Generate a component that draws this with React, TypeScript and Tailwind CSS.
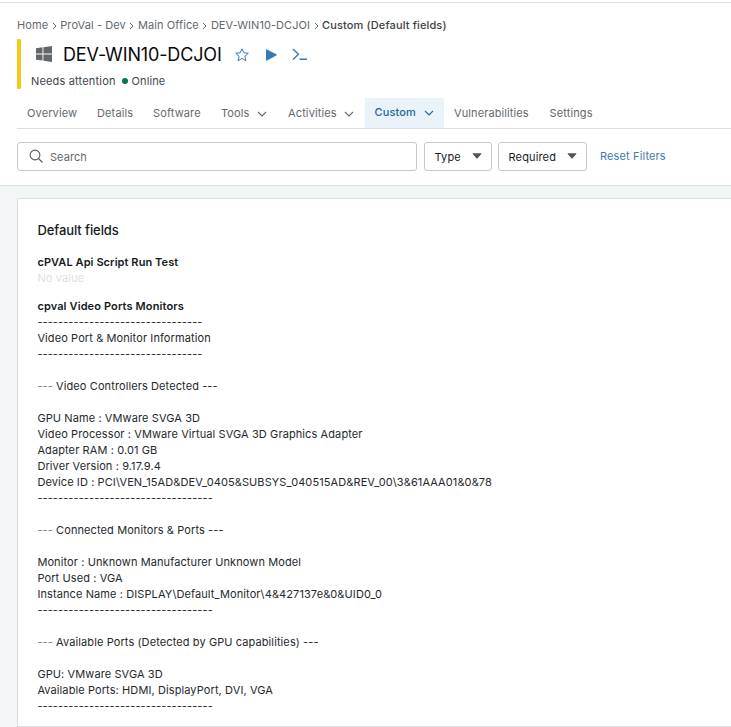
import React from "react";

const Down = () => (
  <svg width="10" height="6" viewBox="0 0 10 6" fill="none" stroke="currentColor" strokeWidth="1.1" className="mt-[2px]">
    <path d="M1 1l4 4 4-4" />
  </svg>
);

const Caret = () => (
  <svg width="10" height="6" viewBox="0 0 10 6" fill="#50575c" className="-mt-[2px]">
    <path d="M1 0.3h8q.8 0 .3.7L5.6 5.3q-.6.6-1.2 0L.7 1Q.2.3 1 .3z" />
  </svg>
);

const Sep = () => (
  <svg width="5" height="8" viewBox="0 0 5 8" fill="none" stroke="#5f666b" strokeWidth="1" className="mx-[3.5px] mt-[1px]">
    <path d="M1 1l3 3-3 3" />
  </svg>
);

const report = `--------------------------------
Video Port & Monitor Information
--------------------------------

--- Video Controllers Detected ---

GPU Name : VMware SVGA 3D
Video Processor : VMware Virtual SVGA 3D Graphics Adapter
Adapter RAM : 0.01 GB
Driver Version : 9.17.9.4
Device ID : PCI\\VEN_15AD&DEV_0405&SUBSYS_040515AD&REV_00\\3&61AAA01&0&78
----------------------------------

--- Connected Monitors & Ports ---

Monitor : Unknown Manufacturer Unknown Model
Port Used : VGA
Instance Name : DISPLAY\\Default_Monitor\\4&427137e&0&UID0_0
----------------------------------

--- Available Ports (Detected by GPU capabilities) ---

GPU: VMware SVGA 3D
Available Ports: HDMI, DisplayPort, DVI, VGA
----------------------------------`;

// Section titles carry a muted leading marker.
const Line = ({ text }: { text: string }) =>
  text.startsWith("--- ") ? (
    <div className="h-4">
      <span className="text-[#7d8285]">---</span>
      {text.slice(3)}
    </div>
  ) : (
    <div className="h-4">{text}</div>
  );

export default function App() {
  return (
    <div className="h-[727px] w-[731px] overflow-hidden bg-[#f2f6f7] font-['Inter',sans-serif] text-[11px] leading-4 text-[#25292c]">
      <header className="h-[186px] border-b border-[#d9dfe2] bg-white">
        <div className="h-[3px] border-b border-[#dcdfe1]" />
        <nav className="flex h-8 items-center pt-[12px] pl-[17px] tracking-[0.1px] whitespace-nowrap text-[#63696e]">
          <span>Home</span><Sep />
          <span>ProVal - Dev</span><Sep />
          <span>Main Office</span><Sep />
          <span className="tracking-[0.06px]">DEV-WIN10-DCJOI</span><Sep />
          <span className="font-medium tracking-[0.13px] text-[#3c4145]">Custom (Default fields)</span>
        </nav>
        <div className="mt-1 ml-[17px] flex h-[50px]">
          <div className="w-1 rounded-[1px] bg-[#f3c816]" />
          <div className="flex flex-col pl-[10px]">
            <div className="flex h-[31px] items-center">
              <svg width="16" height="16" viewBox="0 0 16 16" fill="#62676b" className="-mt-[1px] ml-[5px]">
                <path d="M0 2.3L6.5 1.3V7.4H0zM7.4 1.2L16 0v7.4H7.4zM0 8.4h6.5v6.2L0 13.7zM7.4 8.4H16V16l-8.6-1.2z" />
              </svg>
              <h1 className="ml-[11px] w-[159px] text-[18px] leading-6 font-normal tracking-[-0.14px] whitespace-nowrap text-[#080a0b]">DEV-WIN10-DCJOI</h1>
              <svg width="14" height="14" viewBox="0 0 14 14" fill="none" stroke="#337ab7" strokeWidth="1" strokeLinejoin="round" className="ml-[13px] mt-[1px]">
                <path d="M7 .8l1.8 4 4.5.4-3.4 3 1 4.6L7 10.4l-3.9 2.4 1-4.6-3.4-3 4.5-.4z" />
              </svg>
              <svg width="11" height="12" viewBox="0 0 11 12" fill="#337ab7" className="ml-[17px]">
                <path d="M0 1Q0 0 1 .4L10.3 5.3q.9.6 0 1.2L1 11.6Q0 12 0 11z" />
              </svg>
              <svg width="16" height="13" viewBox="0 0 16 13" fill="none" stroke="#337ab7" strokeWidth="1.4" className="-mt-[1px] ml-[15px]">
                <path d="M1 1l5.4 5.2L1 11.4M7.5 11.3H15" />
              </svg>
            </div>
            <div className="mt-[3px] flex h-4 items-center whitespace-nowrap tracking-[0.17px] text-[#41474b]">
              <span>Needs attention</span>
              <i className="mr-[4px] ml-[6px] h-[6px] w-[6px] rounded-full bg-[#04764b]" />
              <span className="tracking-[0.1px]">Online</span>
            </div>
          </div>
        </div>
        <div className="mt-[9px] ml-[17px] flex h-[31px] items-center border-b border-[#dcdfe1] tracking-[0.13px] whitespace-nowrap text-[#63696e]">
          <span className="ml-[10px] w-[70px]">Overview</span>
          <span className="w-[56px]">Details</span>
          <span className="w-[68px]">Software</span>
          <span className="flex w-[67px] items-center gap-[7.5px]">Tools <Down /></span>
          <span className="flex w-[77px] items-center gap-[7.5px]">Activities <Down /></span>
          <span className="flex h-[30px] w-[79px] items-center gap-2 bg-[#eaf3fa] pb-[2px] pl-[9.5px] font-medium text-[#24689f]">Custom <Down /></span>
          <span className="ml-[10px] w-[95.5px] tracking-[0.1px]">Vulnerabilities</span>
          <span>Settings</span>
        </div>
        <div className="mt-[13px] ml-[17px] flex h-[29px] items-center whitespace-nowrap">
          <div className="flex h-[29px] w-[400px] items-center rounded-[3px] border border-[#c6cacd] pl-[11px] text-[#63696e]">
            <svg width="14" height="14" viewBox="0 0 14 14" fill="none" stroke="#565c60" strokeWidth="1.1" className="-mt-[1px]">
              <circle cx="6" cy="6" r="4.9" /><path d="M9.5 9.5l4 4" />
            </svg>
            <span className="ml-[7px] tracking-[0.05px]">Search</span>
          </div>
          <button className="ml-[7px] flex h-[29px] w-[68px] items-center justify-between rounded-[3px] border border-[#c6cacd] pr-[9px] pl-[9.5px] tracking-[0.15px] text-[#161a1d]">Type <Caret /></button>
          <button className="ml-[6px] flex h-[29px] w-[89px] items-center justify-between rounded-[3px] border border-[#c6cacd] pr-[9px] pl-[9.5px] tracking-[0.15px] text-[#161a1d]">Required <Caret /></button>
          <a className="ml-[13px] pb-[2px] tracking-[0.13px] text-[#417ab0]">Reset Filters</a>
        </div>
      </header>
      <main className="mt-3 ml-[17px] h-[529px] rounded-tl-[2px] border-y border-l border-[#d9dfe2] bg-white pt-[23px] pl-[19.4px]">
        <h2 className="text-[13px] font-medium tracking-[-0.08px] text-[#161a1d]">Default fields</h2>
        <h3 className="mt-4 font-semibold tracking-[0.08px] text-[#161a1d]">cPVAL Api Script Run Test</h3>
        <p className="tracking-[0.1px] text-[#dcdfe1]">No value</p>
        <h3 className="mt-3 font-semibold tracking-[0.12px] text-[#161a1d]">cpval Video Ports Monitors</h3>
        <div className="whitespace-pre tracking-[0.1px]">
          {report.split("\n").map((text, i) => (
            <Line key={i} text={text} />
          ))}
        </div>
      </main>
    </div>
  );
}
